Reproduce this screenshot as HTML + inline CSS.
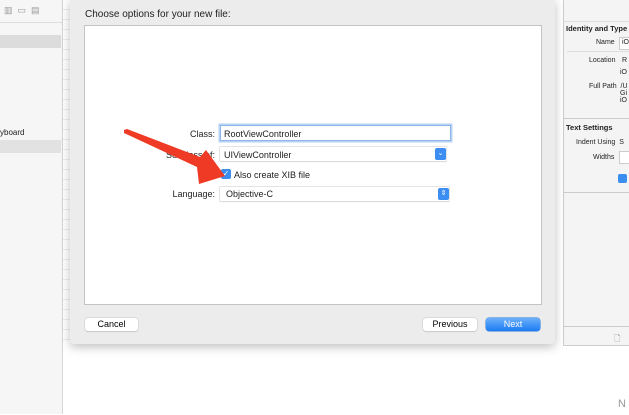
<!DOCTYPE html>
<html><head><style>
body{margin:0;width:629px;height:414px;overflow:hidden;background:#fff;font-family:"Liberation Sans",sans-serif;position:relative}
.a{position:absolute}
.t{font-size:8.5px;color:#222;white-space:nowrap}
.r{position:absolute;right:414px;font-size:9px;color:#222;white-space:nowrap;text-align:right}
.btn{position:absolute;background:#fff;border-radius:3px;box-shadow:0 0 0 .5px #c8c8c8,0 1px 1px rgba(0,0,0,.15);font-size:9px;text-align:center;line-height:13px;height:13px}
</style></head><body>
<div class="a" style="left:0;top:0;width:62px;height:414px;background:#f6f6f6;border-right:1px solid #d6d6d6"></div>
<div class="a" style="left:0;top:0;width:62px;height:22px;border-bottom:1px solid #ddd"></div>
<div class="a t" style="left:4px;top:5px;color:#999;font-size:9px">▥ &nbsp;▭ &nbsp;▤</div>
<div class="a" style="left:0;top:35px;width:61px;height:13px;background:#dcdcdc"></div>
<div class="a t" style="left:0;top:128px;font-size:8px">yboard</div>
<div class="a" style="left:0;top:140px;width:61px;height:13px;background:#e2e2e2"></div>
<div class="a" style="left:63px;top:0;width:500px;height:414px;background:#fff"></div>
<div class="a" style="left:63px;top:0;width:8px;height:344px;background:repeating-linear-gradient(#fff 0 9px,#eee 9px 10px)"></div>
<div class="a" style="left:563px;top:0;width:66px;height:414px;background:#f4f4f4;border-left:1px solid #ccc"></div>
<div class="a" style="left:563px;top:21px;width:66px;height:1px;background:#ddd"></div>
<div class="a t" style="left:566px;top:24px;font-weight:bold;font-size:7.5px">Identity and Type</div>
<div class="a t" style="left:596px;top:39px;font-size:7px">Name</div>
<div class="a" style="left:619px;top:37px;width:10px;height:11px;background:#fff;border:1px solid #ccc"></div>
<div class="a t" style="left:622px;top:39px;font-size:7px">iO</div>
<div class="a" style="left:567px;top:51px;width:62px;height:1px;background:#ddd"></div>
<div class="a t" style="left:589px;top:57px;font-size:7px">Location</div>
<div class="a t" style="left:622px;top:57px;font-size:7px">R</div>
<div class="a t" style="left:620px;top:69px;font-size:7px">iO</div>
<div class="a t" style="left:589px;top:83px;font-size:7px">Full Path &nbsp;/U<br><span style="margin-left:31px">Gi</span><br><span style="margin-left:31px">iO</span></div>
<div class="a" style="left:563px;top:118px;width:66px;height:1px;background:#ccc"></div>
<div class="a t" style="left:566px;top:123px;font-weight:bold;font-size:7.5px">Text Settings</div>
<div class="a t" style="left:576px;top:139px;font-size:7px">Indent Using &nbsp;S</div>
<div class="a t" style="left:593px;top:154px;font-size:7px">Widths</div>
<div class="a" style="left:619px;top:151px;width:10px;height:11px;background:#fff;border:1px solid #ccc"></div>
<div class="a" style="left:618px;top:174px;width:9px;height:9px;background:#3b8ef0;border-radius:2px"></div>
<div class="a" style="left:563px;top:192px;width:66px;height:1px;background:#ccc"></div>
<div class="a" style="left:563px;top:326px;width:66px;height:1px;background:#ccc"></div>
<div class="a" style="left:563px;top:345px;width:66px;height:69px;background:#fff;border-top:1px solid #ccc"></div>
<div class="a t" style="left:614px;top:333px;color:#888;font-size:8px">🗋</div>
<div class="a t" style="left:618px;top:398px;color:#999;font-size:11px">N</div>
<div class="a" style="left:70px;top:-2px;width:485px;height:346px;background:#ececec;border-radius:4px;box-shadow:0 3px 10px rgba(0,0,0,.25)"></div>
<div class="a t" style="left:85px;top:9px;font-size:10px">Choose options for your new file:</div>
<div class="a" style="left:84px;top:25px;width:456px;height:278px;background:#fff;border:1px solid #c4c4c4"></div>
<div class="r" style="top:129px">Class:</div>
<div class="a" style="left:220px;top:125px;width:229px;height:14px;background:#fff;border:1px solid #8fb6e6;box-shadow:0 0 0 1.5px #b6d2f4"></div>
<div class="a t" style="left:224px;top:129px;font-size:9px">RootViewController</div>
<div class="r" style="top:150px">Subclass of:</div>
<div class="a" style="left:220px;top:147px;width:226px;height:14px;background:#fff;box-shadow:0 0 0 .5px #c8c8c8,0 1px 1px rgba(0,0,0,.1)"></div>
<div class="a" style="left:435px;top:148px;width:11px;height:12px;background:#3d8ef3;border-radius:2px;color:#fff;font-size:7px;text-align:center;line-height:12px">⌄</div>
<div class="a t" style="left:224px;top:150px;font-size:9px">UIViewController</div>
<div class="a" style="left:221px;top:169px;width:10px;height:10px;background:#3b8ef0;border-radius:2px;color:#fff;font-size:8px;line-height:10px;text-align:center">✓</div>
<div class="a t" style="left:234px;top:170px;font-size:9px">Also create XIB file</div>
<div class="r" style="top:189px">Language:</div>
<div class="a" style="left:220px;top:187px;width:229px;height:14px;background:#fff;box-shadow:0 0 0 .5px #c8c8c8,0 1px 1px rgba(0,0,0,.1)"></div>
<div class="a" style="left:438px;top:188px;width:11px;height:12px;background:#3d8ef3;border-radius:2px;color:#fff;font-size:7px;text-align:center;line-height:12px">⇕</div>
<div class="a t" style="left:226px;top:189px;font-size:9px">Objective-C</div>
<svg class="a" style="left:0;top:0" width="629" height="414"><path d="M124 130 L127 129 L200 157 L206 150 L225 176 L199 184 L197 167 L124 133 Z" fill="#ef3a25"/></svg>
<div class="btn" style="left:85px;top:318px;width:53px">Cancel</div>
<div class="btn" style="left:423px;top:318px;width:54px">Previous</div>
<div class="btn" style="left:486px;top:318px;width:54px;background:linear-gradient(#6cb0fb,#1d7cf2);color:#fff;box-shadow:0 0 0 .5px #2a76d8">Next</div>
</body></html>
